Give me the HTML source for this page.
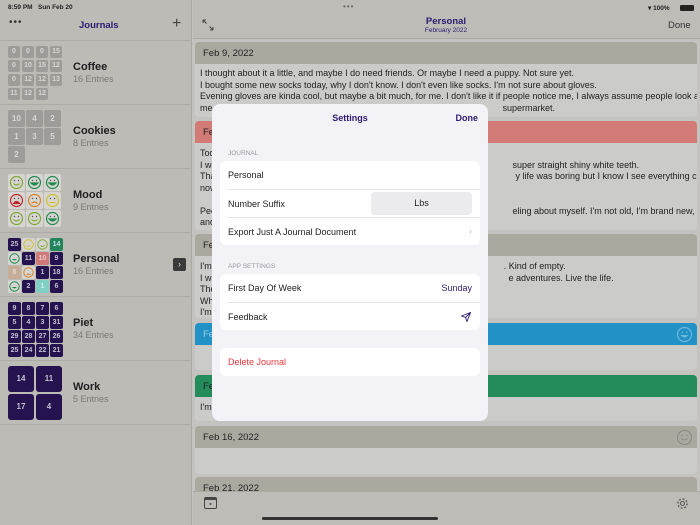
<!DOCTYPE html>
<html><head><meta charset="utf-8">
<style>
*{margin:0;padding:0;box-sizing:border-box}
body{width:700px;height:525px;overflow:hidden;position:relative;background:#c4c3bf;font-family:"Liberation Sans",sans-serif;color:#222}
.a{position:absolute}
.side{left:0;top:0;width:192px;height:525px;background:#bcbbb6;border-right:1px solid #aaa9a4}
.t{position:absolute;border-radius:2px;color:#d8d6d2;font-size:7px;text-align:center;font-weight:bold}
.g{background:#9e9c98}
.n{background:#24134f;color:#c2bfd0}
.ttl{position:absolute;left:73px;font-size:11px;font-weight:bold;color:#1e1e1e}
.sub{position:absolute;left:73px;font-size:9px;color:#7a7975}
.sep{position:absolute;left:0;width:192px;height:1px;background:#acaba6}
.card{position:absolute;left:195px;width:502px;border-radius:4px;overflow:hidden}
.hd{height:22px;background:#aba89f;font-size:9.5px;padding:6px 8px;color:#222}
.bd{background:#cbcbca;font-size:9px;line-height:11.5px;padding:4px 5px 2px;color:#222;white-space:nowrap;overflow:hidden}
.modal{left:212px;top:104px;width:276px;height:317px;background:#f2f2f7;border-radius:8px}
.grp{position:absolute;left:8px;width:260px;background:#fff;border-radius:6px}
.row{height:28px;font-size:9px;padding:9px 8px;position:relative;color:#1e1e1e}
.row+.row{border-top:1px solid #e6e6ea;margin-left:8px;padding-left:0}
.lbl{position:absolute;left:16px;font-size:6.5px;color:#9a9aa0}
</style></head><body>

<div class="a side">
 <div class="a" style="left:8px;top:4px;font-size:6.5px;font-weight:bold;color:#222">8:59 PM&nbsp;&nbsp; Sun Feb 20</div>
 <div class="a" style="left:9px;top:17px;font-size:10px;color:#333;letter-spacing:1px">•••</div>
 <div class="a" style="left:79px;top:20px;font-size:9.5px;font-weight:bold;color:#2e1a72">Journals</div>
 <div class="a" style="left:172px;top:15px;font-size:16px;color:#444;font-weight:300">+</div>
 <div class="sep" style="top:40px"></div>

 <div class="t g" style="left:8px;top:46px;width:12px;height:12px;line-height:12px">0</div>
 <div class="t g" style="left:22px;top:46px;width:12px;height:12px;line-height:12px">0</div>
 <div class="t g" style="left:36px;top:46px;width:12px;height:12px;line-height:12px">0</div>
 <div class="t g" style="left:50px;top:46px;width:12px;height:12px;line-height:12px">15</div>
 <div class="t g" style="left:8px;top:60px;width:12px;height:12px;line-height:12px">0</div>
 <div class="t g" style="left:22px;top:60px;width:12px;height:12px;line-height:12px">10</div>
 <div class="t g" style="left:36px;top:60px;width:12px;height:12px;line-height:12px">15</div>
 <div class="t g" style="left:50px;top:60px;width:12px;height:12px;line-height:12px">12</div>
 <div class="t g" style="left:8px;top:74px;width:12px;height:12px;line-height:12px">0</div>
 <div class="t g" style="left:22px;top:74px;width:12px;height:12px;line-height:12px">12</div>
 <div class="t g" style="left:36px;top:74px;width:12px;height:12px;line-height:12px">12</div>
 <div class="t g" style="left:50px;top:74px;width:12px;height:12px;line-height:12px">13</div>
 <div class="t g" style="left:8px;top:88px;width:12px;height:12px;line-height:12px">11</div>
 <div class="t g" style="left:22px;top:88px;width:12px;height:12px;line-height:12px">12</div>
 <div class="t g" style="left:36px;top:88px;width:12px;height:12px;line-height:12px">12</div>
 <div class="ttl" style="top:61px">Coffee</div><div class="sub" style="top:74px">16 Entries</div>
 <div class="sep" style="top:104px"></div>

 <div class="t g" style="left:8px;top:110px;width:17px;height:17px;line-height:17px;font-size:8px">10</div>
 <div class="t g" style="left:26px;top:110px;width:17px;height:17px;line-height:17px;font-size:8px">4</div>
 <div class="t g" style="left:44px;top:110px;width:17px;height:17px;line-height:17px;font-size:8px">2</div>
 <div class="t g" style="left:8px;top:128px;width:17px;height:17px;line-height:17px;font-size:8px">1</div>
 <div class="t g" style="left:26px;top:128px;width:17px;height:17px;line-height:17px;font-size:8px">3</div>
 <div class="t g" style="left:44px;top:128px;width:17px;height:17px;line-height:17px;font-size:8px">5</div>
 <div class="t g" style="left:8px;top:146px;width:17px;height:17px;line-height:17px;font-size:8px">2</div>
 <div class="ttl" style="top:125px">Cookies</div><div class="sub" style="top:138px">8 Entries</div>
 <div class="sep" style="top:168px"></div>

 <svg class="a" style="left:8px;top:174px" width="54" height="54" viewBox="0 0 54 54">
  <g fill="#d6d5d1"><rect x="0" y="0" width="17" height="17" rx="2"/><rect x="18" y="0" width="17" height="17" rx="2"/><rect x="36" y="0" width="17" height="17" rx="2"/><rect x="0" y="18" width="17" height="17" rx="2"/><rect x="18" y="18" width="17" height="17" rx="2"/><rect x="36" y="18" width="17" height="17" rx="2"/><rect x="0" y="36" width="17" height="17" rx="2"/><rect x="18" y="36" width="17" height="17" rx="2"/><rect x="36" y="36" width="17" height="17" rx="2"/></g>
  <g fill="none" stroke-width="1.2">
   <g stroke="#7fa832"><circle cx="8.5" cy="8.5" r="6"/><path d="M5.5 9.5q3 3 6 0"/></g>
   <g stroke="#1f8a4e"><circle cx="26.5" cy="8.5" r="6"/><path d="M23 9h7q-3.5 4-7 0z" fill="#1f8a4e"/></g>
   <g stroke="#1f8a4e"><circle cx="44.5" cy="8.5" r="6"/><path d="M41 9h7q-3.5 4-7 0z" fill="#1f8a4e"/></g>
   <g stroke="#c1262c"><circle cx="8.5" cy="26.5" r="6"/><path d="M5.5 29.5q3-4 6 0z" fill="#c1262c"/></g>
   <g stroke="#d9822b"><circle cx="26.5" cy="26.5" r="6"/><path d="M23.5 29.5q3-3 6 0"/></g>
   <g stroke="#cfc22c"><circle cx="44.5" cy="26.5" r="6"/><path d="M41.5 28.5h6"/></g>
   <g stroke="#7fa832"><circle cx="8.5" cy="44.5" r="6"/><path d="M5.5 45.5q3 3 6 0"/></g>
   <g stroke="#7fa832"><circle cx="26.5" cy="44.5" r="6"/><path d="M23.5 45.5q3 3 6 0"/></g>
   <g stroke="#1f8a4e"><circle cx="44.5" cy="44.5" r="6"/><path d="M41 45h7q-3.5 4-7 0z" fill="#1f8a4e"/></g>
  </g>
  <g fill="#555"><circle cx="6.5" cy="6.5" r=".7"/><circle cx="10.5" cy="6.5" r=".7"/><circle cx="24.5" cy="6.5" r=".7"/><circle cx="28.5" cy="6.5" r=".7"/><circle cx="42.5" cy="6.5" r=".7"/><circle cx="46.5" cy="6.5" r=".7"/><circle cx="6.5" cy="24.5" r=".7"/><circle cx="10.5" cy="24.5" r=".7"/><circle cx="24.5" cy="24.5" r=".7"/><circle cx="28.5" cy="24.5" r=".7"/><circle cx="42.5" cy="24.5" r=".7"/><circle cx="46.5" cy="24.5" r=".7"/><circle cx="6.5" cy="42.5" r=".7"/><circle cx="10.5" cy="42.5" r=".7"/><circle cx="24.5" cy="42.5" r=".7"/><circle cx="28.5" cy="42.5" r=".7"/><circle cx="42.5" cy="42.5" r=".7"/><circle cx="46.5" cy="42.5" r=".7"/></g>
 </svg>
 <div class="ttl" style="top:189px">Mood</div><div class="sub" style="top:202px">9 Entries</div>
 <div class="sep" style="top:232px"></div>

 <div class="t n" style="left:8px;top:238px;width:13px;height:13px;line-height:13px">25</div>
 <svg class="a" style="left:22px;top:238px" width="13" height="13"><rect width="13" height="13" rx="2" fill="#d6d5d1"/><circle cx="6.5" cy="6.5" r="4.7" fill="none" stroke="#cfc22c"/><path d="M4.5 8h4" stroke="#cfc22c"/></svg>
 <svg class="a" style="left:36px;top:238px" width="13" height="13"><rect width="13" height="13" rx="2" fill="#d6d5d1"/><circle cx="6.5" cy="6.5" r="4.7" fill="none" stroke="#7fa832"/><path d="M4.5 7.5q2 2 4 0" fill="none" stroke="#7fa832"/></svg>
 <div class="t" style="left:50px;top:238px;width:13px;height:13px;line-height:13px;background:#23855a;color:#cde">14</div>
 <svg class="a" style="left:8px;top:252px" width="13" height="13"><rect width="13" height="13" rx="2" fill="#d6d5d1"/><circle cx="6.5" cy="6.5" r="4.7" fill="none" stroke="#1f8a4e"/><path d="M4 7h5q-2.5 3-5 0z" fill="#1f8a4e"/></svg>
 <div class="t n" style="left:22px;top:252px;width:13px;height:13px;line-height:13px">11</div>
 <div class="t" style="left:36px;top:252px;width:13px;height:13px;line-height:13px;background:#cf7a7a;color:#e8c8c8">10</div>
 <div class="t n" style="left:50px;top:252px;width:13px;height:13px;line-height:13px">9</div>
 <div class="t" style="left:8px;top:266px;width:13px;height:13px;line-height:13px;background:#c7ad98;color:#e2d6cc">8</div>
 <svg class="a" style="left:22px;top:266px" width="13" height="13"><rect width="13" height="13" rx="2" fill="#d6d5d1"/><circle cx="6.5" cy="6.5" r="4.7" fill="none" stroke="#d9822b"/><path d="M4.5 9q2-2 4 0" fill="none" stroke="#d9822b"/></svg>
 <div class="t n" style="left:36px;top:266px;width:13px;height:13px;line-height:13px">1</div>
 <div class="t n" style="left:50px;top:266px;width:13px;height:13px;line-height:13px">18</div>
 <svg class="a" style="left:8px;top:280px" width="13" height="13"><rect width="13" height="13" rx="2" fill="#d6d5d1"/><circle cx="6.5" cy="6.5" r="4.7" fill="none" stroke="#1f8a4e"/><path d="M4 7h5q-2.5 3-5 0z" fill="#1f8a4e"/></svg>
 <div class="t n" style="left:22px;top:280px;width:13px;height:13px;line-height:13px">2</div>
 <div class="t" style="left:36px;top:280px;width:13px;height:13px;line-height:13px;background:#7fcfc4;color:#d8eeea">1</div>
 <div class="t n" style="left:50px;top:280px;width:13px;height:13px;line-height:13px">6</div>
 <div class="ttl" style="top:253px">Personal</div><div class="sub" style="top:266px">16 Entries</div>
 <div class="a" style="left:173px;top:258px;width:13px;height:13px;background:#3a3a3a;border-radius:2px;color:#ddd;font-size:9px;text-align:center;line-height:13px">&#8250;</div>
 <div class="sep" style="top:296px"></div>

 <div class="t n" style="left:8px;top:302px;width:13px;height:13px;line-height:13px">9</div>
 <div class="t n" style="left:22px;top:302px;width:13px;height:13px;line-height:13px">8</div>
 <div class="t n" style="left:36px;top:302px;width:13px;height:13px;line-height:13px">7</div>
 <div class="t n" style="left:50px;top:302px;width:13px;height:13px;line-height:13px">6</div>
 <div class="t n" style="left:8px;top:316px;width:13px;height:13px;line-height:13px">5</div>
 <div class="t n" style="left:22px;top:316px;width:13px;height:13px;line-height:13px">4</div>
 <div class="t n" style="left:36px;top:316px;width:13px;height:13px;line-height:13px">3</div>
 <div class="t n" style="left:50px;top:316px;width:13px;height:13px;line-height:13px">31</div>
 <div class="t n" style="left:8px;top:330px;width:13px;height:13px;line-height:13px">29</div>
 <div class="t n" style="left:22px;top:330px;width:13px;height:13px;line-height:13px">28</div>
 <div class="t n" style="left:36px;top:330px;width:13px;height:13px;line-height:13px">27</div>
 <div class="t n" style="left:50px;top:330px;width:13px;height:13px;line-height:13px">26</div>
 <div class="t n" style="left:8px;top:344px;width:13px;height:13px;line-height:13px">25</div>
 <div class="t n" style="left:22px;top:344px;width:13px;height:13px;line-height:13px">24</div>
 <div class="t n" style="left:36px;top:344px;width:13px;height:13px;line-height:13px">22</div>
 <div class="t n" style="left:50px;top:344px;width:13px;height:13px;line-height:13px">21</div>
 <div class="ttl" style="top:317px">Piet</div><div class="sub" style="top:330px">34 Entries</div>
 <div class="sep" style="top:360px"></div>

 <div class="t n" style="left:8px;top:366px;width:26px;height:26px;line-height:26px;font-size:8px;border-radius:3px">14</div>
 <div class="t n" style="left:36px;top:366px;width:26px;height:26px;line-height:26px;font-size:8px;border-radius:3px">11</div>
 <div class="t n" style="left:8px;top:394px;width:26px;height:26px;line-height:26px;font-size:8px;border-radius:3px">17</div>
 <div class="t n" style="left:36px;top:394px;width:26px;height:26px;line-height:26px;font-size:8px;border-radius:3px">4</div>
 <div class="ttl" style="top:381px">Work</div><div class="sub" style="top:394px">5 Entries</div>
 <div class="sep" style="top:424px"></div>
</div>

<div class="a" style="left:193px;top:0;width:507px;height:39px;background:#bdbcb7;border-bottom:1px solid #aaa9a4"></div>
<div class="a" style="left:343px;top:2px;font-size:8px;color:#666;letter-spacing:1px">•••</div>
<div class="a" style="left:648px;top:4px;font-size:6.5px;font-weight:bold;color:#222">&#9662; 100%</div>
<div class="a" style="left:680px;top:5px;width:14px;height:6px;background:#222;border-radius:1px"></div>
<svg class="a" style="left:202px;top:19px" width="12" height="12"><path d="M1 1l3.5 3.5M1 1h3M1 1v3M11 11L7.5 7.5M11 11H8M11 11V8" stroke="#444" stroke-width="1" fill="none"/></svg>
<div class="a" style="left:400px;top:16px;width:92px;text-align:center;font-size:9.5px;font-weight:bold;color:#2e1a72">Personal</div>
<div class="a" style="left:400px;top:27px;width:92px;text-align:center;font-size:6.5px;color:#2e1a72">February 2022</div>
<div class="a" style="left:668px;top:20px;font-size:9.5px;color:#333">Done</div>

<div class="card" style="top:42px"><div class="hd">Feb 9, 2022</div><div class="bd" style="height:53px">I thought about it a little, and maybe I do need friends. Or maybe I need a puppy. Not sure yet.<br>I bought some new socks today, why I don't know. I don't even like socks. I'm not sure about gloves.<br>Evening gloves are kinda cool, but maybe a bit much, for me. I don't like it if people notice me, I always assume people look at<br>me<span style="padding-left:290px">supermarket.</span></div></div>

<div class="card" style="top:121px"><div class="hd" style="background:#d17a76">Feb</div><div class="bd" style="height:87px;padding-top:5px">Tod<br>I wa<span style="padding-left:296px">super straight shiny white teeth.</span><br>Tha<span style="padding-left:300px">y life was boring but I know I see everything clearly</span><br>now<br><br>Pec<span style="padding-left:297px">eling about myself. I'm not old, I'm brand new, sexy</span><br>and</div></div>

<div class="card" style="top:234px"><div class="hd">Fe</div><div class="bd" style="height:62px;padding-top:5px">I'm<span style="padding-left:292px">. Kind of empty.</span><br>I wa<span style="padding-left:292px">e adventures. Live the life.</span><br>The<br>Wh<br>I'm</div></div>

<div class="card" style="top:323px"><div class="hd" style="background:#2292c6;color:#9cc9e0">Fe</div><div class="bd" style="height:25px"></div></div>
<svg class="a" style="left:676px;top:326px" width="17" height="17"><circle cx="8.5" cy="8.5" r="7" fill="none" stroke="#6fb6db" stroke-width="1.2"/><path d="M4.5 9h8q-4 5-8 0z" fill="#6fb6db"/><circle cx="6.3" cy="6.3" r=".8" fill="#6fb6db"/><circle cx="10.7" cy="6.3" r=".8" fill="#6fb6db"/></svg>

<div class="card" style="top:375px"><div class="hd" style="background:#238c5a">Fe</div><div class="bd" style="height:24px;padding-top:5px">I'm</div></div>

<div class="card" style="top:426px"><div class="hd">Feb 16, 2022</div><div class="bd" style="height:26px"></div></div>
<svg class="a" style="left:676px;top:429px" width="17" height="17"><circle cx="8.5" cy="8.5" r="7" fill="none" stroke="#8d8b85" stroke-width="1.1"/><path d="M5 9.5q3.5 3 7 0" fill="none" stroke="#8d8b85"/><circle cx="6.3" cy="6.5" r=".8" fill="#8d8b85"/><circle cx="10.7" cy="6.5" r=".8" fill="#8d8b85"/></svg>
<div class="card" style="top:477px"><div class="hd" style="height:20px">Feb 21, 2022</div></div>

<div class="a" style="left:193px;top:491px;width:507px;height:34px;background:#bdbcb7;border-top:1px solid #aaa9a4"></div>
<svg class="a" style="left:204px;top:497px" width="13" height="12"><rect x=".5" y=".5" width="12" height="11" rx="1.5" fill="none" stroke="#444"/><rect x=".5" y=".5" width="12" height="2.5" fill="#444"/><circle cx="6.5" cy="7" r="1" fill="#444"/></svg>
<svg class="a" style="left:676px;top:497px" width="13" height="13" viewBox="0 0 13 13"><circle cx="6.5" cy="6.5" r="2" fill="none" stroke="#555"/><circle cx="6.5" cy="6.5" r="4.6" fill="none" stroke="#555" stroke-width="1.4" stroke-dasharray="1.8 1.8"/></svg>
<div class="a" style="left:262px;top:517px;width:176px;height:3px;border-radius:2px;background:#333"></div>

<div class="a modal">
 <div class="a" style="left:0;top:9px;width:276px;text-align:center;font-size:9px;font-weight:bold;color:#2e1a72">Settings</div>
 <div class="a" style="right:10px;top:9px;font-size:9px;font-weight:bold;color:#2e1a72">Done</div>
 <div class="lbl" style="top:46px">JOURNAL</div>
 <div class="grp" style="top:57px">
  <div class="row">Personal</div>
  <div class="row">Number Suffix<div class="a" style="left:143px;top:2px;width:101px;height:23px;background:#ececee;border-radius:4px;text-align:center;line-height:23px">Lbs</div></div>
  <div class="row">Export Just A Journal Document<span class="a" style="right:8px;top:8px;color:#bbb">&#8250;</span></div>
 </div>
 <div class="lbl" style="top:159px">APP SETTINGS</div>
 <div class="grp" style="top:170px">
  <div class="row">First Day Of Week<span class="a" style="right:8px;top:9px;color:#2e1a72">Sunday</span></div>
  <div class="row">Feedback<svg class="a" style="right:9px;top:9px" width="10" height="10"><path d="M9.5.5L.5 4l4 1.5 1.5 4z M9.5.5L4.5 5.5" fill="none" stroke="#2e1a72" stroke-width=".9"/></svg></div>
 </div>
 <div class="grp" style="top:244px">
  <div class="row" style="color:#e8363a">Delete Journal</div>
 </div>
</div>

</body></html>
